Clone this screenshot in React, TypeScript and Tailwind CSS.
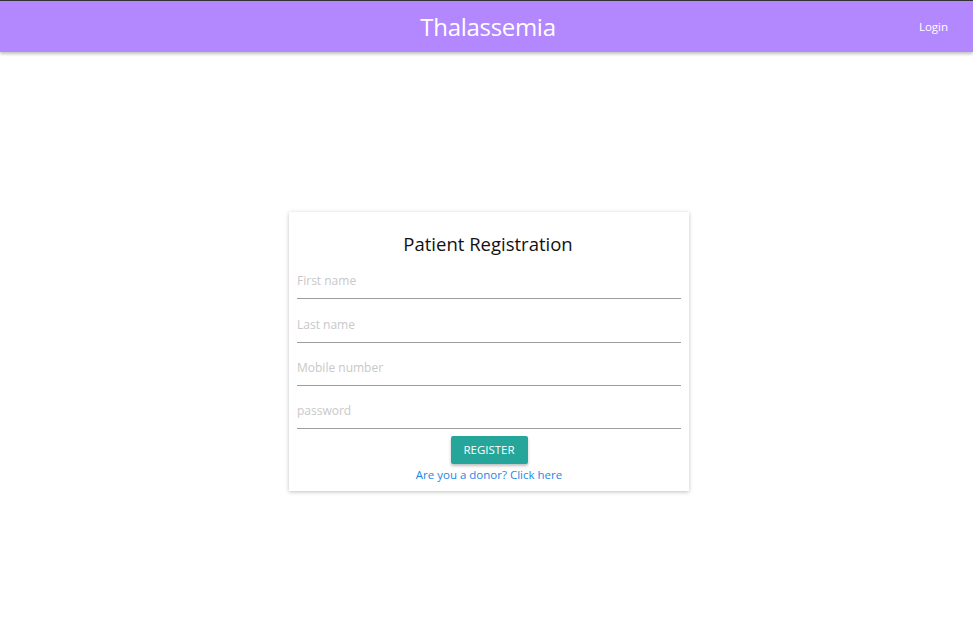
import React from "react";

export default function App() {
  const font = { fontFamily: '"Segoe UI", "Open Sans", "Noto Sans", sans-serif' };
  const fields = ["First name", "Last name", "Mobile number", "password"];
  const gaps = ["", "mt-[12px]", "mt-[11px]", "mt-[11px]"];
  return (
    <div className="min-h-[624px] w-full bg-white" style={font}>
      <div className="border-t border-[#333]" />
      <nav className="relative flex h-[51px] items-center justify-center bg-[#b388ff] shadow-[0_2px_3px_rgba(0,0,0,0.25)]">
        <span className="pl-[3px] text-[24px] tracking-[-0.3px] text-white">Thalassemia</span>
        <span className="absolute right-[25px] top-[17px] text-[11.5px] text-white">Login</span>
      </nav>
      <div className="flex justify-center pl-[5px] pt-[160px]">
        <div className="w-[400px] bg-white px-2 pb-[8px] pt-[20px] shadow-[0_1px_4px_rgba(0,0,0,0.25)]">
          <h2 className="pr-[2px] text-center text-[18.5px] leading-[24px] text-[#111]">Patient Registration</h2>
          <div className="mt-[11px] flex flex-col">
            {fields.map((f, i) => (
              <input
                key={f}
                placeholder={f}
                type={f === "password" ? "password" : "text"}
                className={`h-[32px] w-full border-b border-[#9e9e9e] pb-[4px] text-[12px] text-[#333] outline-none placeholder:text-[#c8c8c8] ${gaps[i]}`}
              />
            ))}
          </div>
          <div className="mt-[7px] flex flex-col items-center">
            <button className="h-[28px] w-[77px] rounded-[2px] bg-[#26a69a] text-[11.5px] text-white shadow-[0_2px_3px_rgba(0,0,0,0.25)]">
              REGISTER
            </button>
            <a className="mt-[3px] text-[11.5px] leading-[16px] text-[#1e88e5]">Are you a donor? Click here</a>
          </div>
        </div>
      </div>
    </div>
  );
}
